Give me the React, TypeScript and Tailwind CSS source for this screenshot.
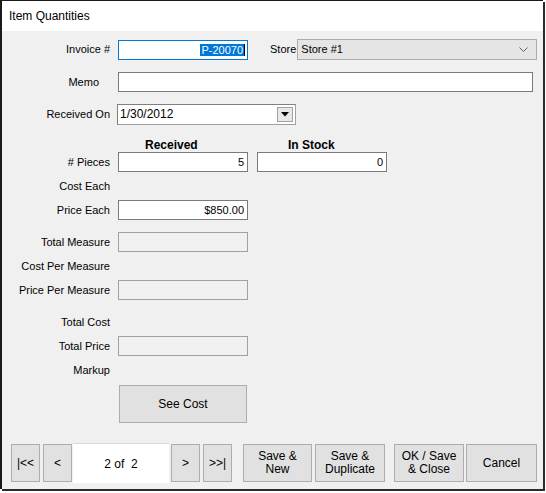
import React from "react";

const font = { fontFamily: '"Liberation Sans", Arial, sans-serif' };

function Label({ children, pr = 0 }: { children: React.ReactNode; pr?: number }) {
  return (
    <div className={`w-[108px] shrink-0 text-right ${pr ? "pr-[11px]" : ""}`}>{children}</div>
  );
}

function Box({
  value,
  disabled,
  w = "w-[130px]",
}: {
  value?: string;
  disabled?: boolean;
  w?: string;
}) {
  return (
    <div
      className={`${w} h-[20px] shrink-0 border flex items-center justify-end pr-[3px] ${
        disabled ? "bg-[#f0f0f0] border-[#a0a0a0]" : "bg-white border-[#7a7a7a]"
      }`}
    >
      {value}
    </div>
  );
}

function NavBtn({ children, className = "" }: { children: React.ReactNode; className?: string }) {
  return (
    <div
      className={`h-[38px] shrink-0 bg-[#e1e1e1] border border-[#adadad] flex items-center justify-center text-center leading-[13px] ${className}`}
    >
      {children}
    </div>
  );
}

export default function App() {
  return (
    <div className="w-[546px] h-[493px] bg-white relative text-[11px] text-black" style={font}>
      <div className="w-[543px] h-[489px] border-t border-l-2 border-[#1a1a1a] shadow-[2px_2px_0_#2a2a2a] flex flex-col">
        {/* title */}
        <div className="h-[30px] bg-white flex items-center pl-[7px] text-[12px] shrink-0">
          Item Quantities
        </div>
        {/* body */}
        <div className="flex-1 bg-[#f0f0f0] flex flex-col pt-[8px]">
          {/* Invoice row */}
          <div className="flex items-center h-[21px]">
            <Label>Invoice #</Label>
            <div className="ml-[8px] w-[130px] h-[20px] bg-white border border-[#0078d7] flex items-center justify-end pr-[2px]">
              <span className="bg-[#0078d7] text-white leading-[12px] px-[1px]">P-20070</span>
              <span className="w-[1px] h-[12px] bg-black" />
            </div>
            <div className="ml-[22px]">Store</div>
            <div className="ml-[1px] w-[240px] h-[21px] bg-[#e5e5e5] border border-[#acacac] flex items-center pl-[3px] pr-[8px]">
              <span className="flex-1">Store #1</span>
              <svg width="9" height="6" viewBox="0 0 9 6">
                <path d="M0.5 0.5 L4.5 4.5 L8.5 0.5" fill="none" stroke="#606060" strokeWidth="1" />
              </svg>
            </div>
          </div>
          {/* Memo */}
          <div className="flex items-center h-[20px] mt-[12px]">
            <Label pr={1}>Memo</Label>
            <div className="ml-[8px]">
              <Box w="w-[415px]" />
            </div>
          </div>
          {/* Received On */}
          <div className="flex items-center h-[20px] mt-[12px]">
            <Label>Received On</Label>
            <div className="ml-[7px] w-[179px] h-[21px] bg-white border border-[#a0a0a0] border-t-[#808080] border-l-[#808080] flex items-center pl-[2px] pr-[2px] text-[12px]">
              <span className="flex-1">1/30/2012</span>
              <div className="w-[16px] h-[15px] bg-[#e8e8e8] border border-[#a0a0a0] flex items-center justify-center">
                <svg width="8" height="5" viewBox="0 0 8 5">
                  <path d="M0 0 L8 0 L4 4.5 Z" fill="#000" />
                </svg>
              </div>
            </div>
          </div>
          {/* headers */}
          <div className="flex items-center h-[14px] mt-[14px] font-bold text-[12px]">
            <div className="w-[116px] shrink-0" />
            <div className="w-[130px] pl-[27px]">Received</div>
            <div className="ml-[9px] w-[130px] pl-[31px]">In Stock</div>
          </div>
          {/* # Pieces */}
          <div className="flex items-center h-[20px]">
            <Label># Pieces</Label>
            <div className="ml-[8px] flex">
              <Box value="5" />
              <div className="ml-[9px]">
                <Box value="0" />
              </div>
            </div>
          </div>
          {/* Cost Each */}
          <div className="flex items-center h-[20px] mt-[4px]">
            <Label>Cost Each</Label>
          </div>
          {/* Price Each */}
          <div className="flex items-center h-[20px] mt-[4px]">
            <Label>Price Each</Label>
            <div className="ml-[8px]">
              <Box value="$850.00" />
            </div>
          </div>
          {/* Total Measure */}
          <div className="flex items-center h-[20px] mt-[12px]">
            <Label>Total Measure</Label>
            <div className="ml-[8px]">
              <Box disabled />
            </div>
          </div>
          <div className="flex items-center h-[20px] mt-[4px]">
            <Label>Cost Per Measure</Label>
          </div>
          <div className="flex items-center h-[20px] mt-[4px]">
            <Label>Price Per Measure</Label>
            <div className="ml-[8px]">
              <Box disabled />
            </div>
          </div>
          <div className="flex items-center h-[20px] mt-[12px]">
            <Label>Total Cost</Label>
          </div>
          <div className="flex items-center h-[20px] mt-[4px]">
            <Label>Total Price</Label>
            <div className="ml-[8px]">
              <Box disabled />
            </div>
          </div>
          <div className="flex items-center h-[20px] mt-[4px]">
            <Label>Markup</Label>
          </div>
          {/* See Cost */}
          <div className="flex mt-[5px]">
            <div className="ml-[117px] w-[128px] h-[38px] bg-[#e1e1e1] border border-[#adadad] flex items-center justify-center text-[12px]">
              See Cost
            </div>
          </div>
          {/* bottom bar */}
          <div className="flex items-center h-[40px] mt-[20px] pl-[9px] text-[12px]">
            <NavBtn className="w-[29px]">|&lt;&lt;</NavBtn>
            <NavBtn className="w-[29px] ml-[3px]">&lt;</NavBtn>
            <div className="w-[96px] h-[40px] ml-[1px] bg-white border-t border-[#d8d8d8] flex items-center justify-center whitespace-pre">
              2 of  2
            </div>
            <NavBtn className="w-[29px] ml-[2px]">&gt;</NavBtn>
            <NavBtn className="w-[29px] ml-[3px]">&gt;&gt;|</NavBtn>
            <NavBtn className="w-[69px] ml-[11px]">
              Save &amp;
              <br />
              New
            </NavBtn>
            <NavBtn className="w-[70px] ml-[3px]">
              Save &amp;
              <br />
              Duplicate
            </NavBtn>
            <NavBtn className="w-[70px] ml-[9px]">
              OK / Save
              <br />
              &amp; Close
            </NavBtn>
            <NavBtn className="w-[71px] ml-[2px]">Cancel</NavBtn>
          </div>
        </div>
      </div>
    </div>
  );
}
